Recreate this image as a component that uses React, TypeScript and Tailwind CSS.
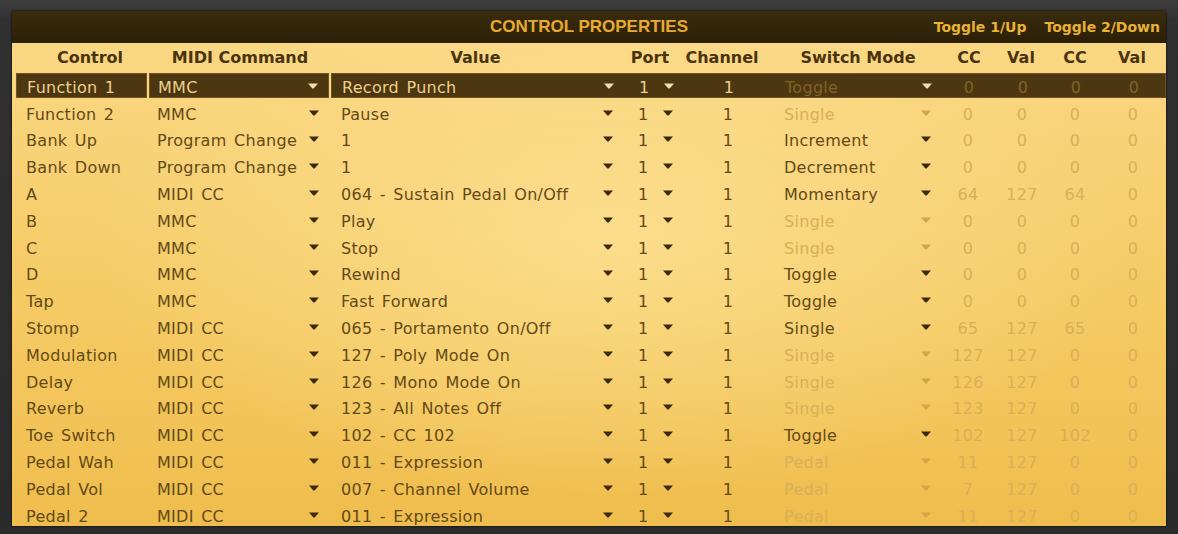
import React from 'react';

type Row = {
  control: string;
  command: string;
  value: string;
  mode: string;
  modeOn: boolean;
  cc: [string, string, string, string];
};

const rows: Row[] = [
  { control: 'Function 1', command: 'MMC', value: 'Record Punch', mode: 'Toggle', modeOn: false, cc: ['0', '0', '0', '0'] },
  { control: 'Function 2', command: 'MMC', value: 'Pause', mode: 'Single', modeOn: false, cc: ['0', '0', '0', '0'] },
  { control: 'Bank Up', command: 'Program Change', value: '1', mode: 'Increment', modeOn: true, cc: ['0', '0', '0', '0'] },
  { control: 'Bank Down', command: 'Program Change', value: '1', mode: 'Decrement', modeOn: true, cc: ['0', '0', '0', '0'] },
  { control: 'A', command: 'MIDI CC', value: '064 - Sustain Pedal On/Off', mode: 'Momentary', modeOn: true, cc: ['64', '127', '64', '0'] },
  { control: 'B', command: 'MMC', value: 'Play', mode: 'Single', modeOn: false, cc: ['0', '0', '0', '0'] },
  { control: 'C', command: 'MMC', value: 'Stop', mode: 'Single', modeOn: false, cc: ['0', '0', '0', '0'] },
  { control: 'D', command: 'MMC', value: 'Rewind', mode: 'Toggle', modeOn: true, cc: ['0', '0', '0', '0'] },
  { control: 'Tap', command: 'MMC', value: 'Fast Forward', mode: 'Toggle', modeOn: true, cc: ['0', '0', '0', '0'] },
  { control: 'Stomp', command: 'MIDI CC', value: '065 - Portamento On/Off', mode: 'Single', modeOn: true, cc: ['65', '127', '65', '0'] },
  { control: 'Modulation', command: 'MIDI CC', value: '127 - Poly Mode On', mode: 'Single', modeOn: false, cc: ['127', '127', '0', '0'] },
  { control: 'Delay', command: 'MIDI CC', value: '126 - Mono Mode On', mode: 'Single', modeOn: false, cc: ['126', '127', '0', '0'] },
  { control: 'Reverb', command: 'MIDI CC', value: '123 - All Notes Off', mode: 'Single', modeOn: false, cc: ['123', '127', '0', '0'] },
  { control: 'Toe Switch', command: 'MIDI CC', value: '102 - CC 102', mode: 'Toggle', modeOn: true, cc: ['102', '127', '102', '0'] },
  { control: 'Pedal Wah', command: 'MIDI CC', value: '011 - Expression', mode: 'Pedal', modeOn: false, cc: ['11', '127', '0', '0'] },
  { control: 'Pedal Vol', command: 'MIDI CC', value: '007 - Channel Volume', mode: 'Pedal', modeOn: false, cc: ['7', '127', '0', '0'] },
  { control: 'Pedal 2', command: 'MIDI CC', value: '011 - Expression', mode: 'Pedal', modeOn: false, cc: ['11', '127', '0', '0'] },
];

const cols = 'grid grid-cols-[137px_182px_289px_60px_96px_164px_58px_50px_56px_62px]';

function Arrow({ tone }: { tone: 'dark' | 'faded' | 'light' }) {
  const fill = tone === 'dark' ? '#3b2a08' : tone === 'faded' ? '#d2a548' : '#f3dfae';
  return (
    <svg width="10" height="6" viewBox="0 0 10 6" className="shrink-0 -mt-[4px]">
      <path d="M0 0.5 L10 0.5 L5.6 5.5 L4.4 5.5 Z" fill={fill} />
    </svg>
  );
}

function TableRow({ row, selected }: { row: Row; selected: boolean }) {
  const text = selected ? 'text-[#ecd08e]' : 'text-[#634917]';
  const faded = selected ? 'text-[#806327]' : 'text-[#d9af57]';
  const on = selected ? 'light' : 'dark';
  const box = selected ? 'bg-[#4d3710] border border-[#6e5424]' : '';

  return (
    <div className={`${cols} h-[26.8px] py-[1px] text-[16px] leading-none tracking-[0.3px] [word-spacing:2px]`}>
      <div className={`flex items-center pt-[5px] pl-[10px] ml-[4px] mr-[2px] ${box} ${text}`}>{row.control}</div>
      <div className={`flex items-center justify-between pt-[5px] pl-[8px] pr-[10px] mr-[2px] ${box} ${text}`}>
        <span>{row.command}</span>
        <Arrow tone={on} />
      </div>
      <div className={`col-span-8 flex items-stretch pt-[5px] ${box}`}>
        <div className={`w-[288px] flex items-center justify-between pl-[10px] pr-[6px] ${text}`}>
          <span>{row.value}</span>
          <Arrow tone={on} />
        </div>
        <div className={`w-[60px] flex items-center pl-[19px] gap-[15px] ${text}`}>
          <span>1</span>
          <Arrow tone={on} />
        </div>
        <div className={`w-[96px] flex items-center justify-center pl-[2px] ${text}`}>1</div>
        <div className="w-[164px] flex items-center justify-between pl-[9px] pr-[8px]">
          <span className={row.modeOn ? text : faded}>{row.mode}</span>
          <Arrow tone={row.modeOn ? on : selected ? 'light' : 'faded'} />
        </div>
        <div className={`w-[58px] flex items-center justify-center ${faded}`}>{row.cc[0]}</div>
        <div className={`w-[50px] flex items-center justify-center ${faded}`}>{row.cc[1]}</div>
        <div className={`w-[56px] flex items-center justify-center ${faded}`}>{row.cc[2]}</div>
        <div className={`w-[60px] flex items-center justify-center ${faded}`}>{row.cc[3]}</div>
      </div>
    </div>
  );
}

export default function App() {
  return (
    <div className="w-[1178px] h-[534px] bg-[linear-gradient(#3e3e3e,#303030_20px,#2b2b2b)] pt-[11px] pl-[12px] pr-[12px] pb-[8px] flex font-['DejaVu_Sans',sans-serif] overflow-hidden">
      <div className="flex-1 flex flex-col overflow-hidden shadow-[0_0_2px_#000]">
        {/* Title strip */}
        <div className="h-[32px] shrink-0 grid grid-cols-[1fr_auto_1fr] items-center bg-[linear-gradient(#3a2b0c,#2b1f06)]">
          <div />
          <div className="font-['Liberation_Sans',Arial,sans-serif] font-bold text-[17px] text-[#e7aa30]">
            CONTROL PROPERTIES
          </div>
          <div className="flex justify-end gap-[18px] pr-[6px] font-bold text-[14px] text-[#e9b234]">
            <span>Toggle 1/Up</span>
            <span>Toggle 2/Down</span>
          </div>
        </div>

        {/* Table body */}
        <div className="flex-1 bg-[image:radial-gradient(ellipse_520px_260px_at_52%_40%,rgba(253,226,150,0.75),rgba(253,226,150,0)_100%),linear-gradient(#fad783,#f5ca63_55%,#efbd4d)]">
          <div className={`${cols} h-[29px] items-center font-bold text-[16px] text-[#4a3410]`}>
            <div className="text-center pl-[19px]">Control</div>
            <div className="text-center">MIDI Command</div>
            <div className="text-center">Value</div>
            <div className="text-center">Port</div>
            <div className="text-center pr-[12px]">Channel</div>
            <div className="text-center">Switch Mode</div>
            <div className="text-center">CC</div>
            <div className="text-center pr-[4px]">Val</div>
            <div className="text-center pr-[2px]">CC</div>
            <div className="text-center pr-[6px]">Val</div>
          </div>
          {rows.map((r, i) => (
            <TableRow key={r.control} row={r} selected={i === 0} />
          ))}
        </div>
      </div>
    </div>
  );
}
